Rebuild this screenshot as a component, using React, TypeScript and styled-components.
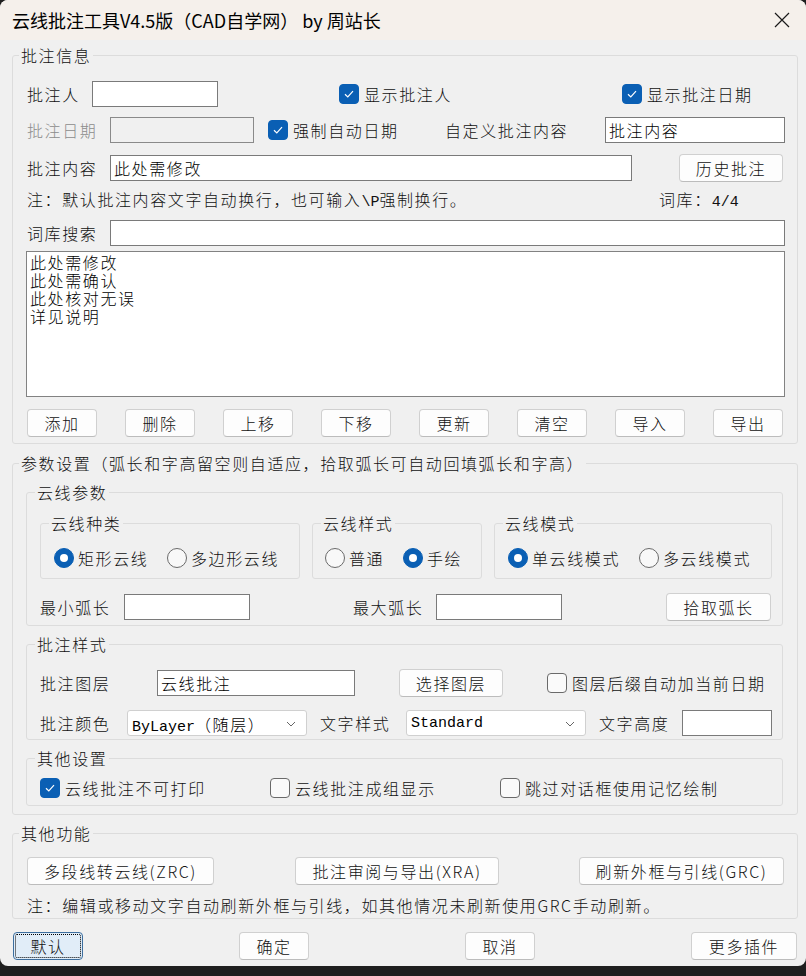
import styled, { createGlobalStyle } from "styled-components";

const GlobalStyle = createGlobalStyle`
	html, body {
		margin: 0;
		padding: 0;
		background: #1f1f1f;
	}
	body {
		width: 806px;
		height: 976px;
		overflow: hidden;
		font-family: "Noto Sans CJK SC", "Liberation Sans", sans-serif;
	}
`;

const Window = styled.div`
	width: 806px;
	height: 966px;
	background: #f0f0f0;
	border-radius: 8px;
	overflow: hidden;
	display: flex;
	flex-direction: column;
	font-size: 16px;
	font-weight: 300;
	letter-spacing: 1.6px;
	color: #111;
`;

const TitleBar = styled.header`
	height: 40px;
	flex: none;
	display: flex;
	align-items: center;
	justify-content: space-between;
	padding: 0 16px 0 12px;
	background: #f5f0eb;
	font-size: 18px;
	font-weight: 400;
	letter-spacing: 0;
	color: #000;
`;

const Content = styled.main`
	padding: 4px 8px 0 12px;
	display: flex;
	flex-direction: column;
`;

const Group = styled.fieldset<{ $mt?: number; $w?: number }>`
	box-sizing: border-box;
	width: ${p => (p.$w ? `${p.$w}px` : "auto")};
	margin: ${p => p.$mt ?? 0}px 0 0 0;
	padding: 0;
	border: 1px solid #dcdcdc;
	border-radius: 3px;
	min-width: 0;
`;

const Legend = styled.legend<{ $ml?: number }>`
	margin-left: ${p => p.$ml ?? 6}px;
	padding: 0 2px;
	height: 22px;
	line-height: 22px;
	white-space: nowrap;
`;

const GroupBody = styled.div<{ $pad: string }>`
	padding: ${p => p.$pad};
	display: flex;
	flex-direction: column;
`;

const Row = styled.div<{ $h?: number; $mt?: number; $gap?: number }>`
	display: flex;
	align-items: center;
	height: ${p => p.$h ?? 28}px;
	margin-top: ${p => p.$mt ?? 0}px;
	gap: ${p => p.$gap ?? 0}px;
`;

const Label = styled.span<{ $w?: number; $ml?: number; $muted?: boolean }>`
	flex: none;
	width: ${p => (p.$w ? `${p.$w}px` : "auto")};
	margin-left: ${p => p.$ml ?? 0}px;
	white-space: nowrap;
	color: ${p => (p.$muted ? "#8c8c8c" : "inherit")};
`;

const Mono = styled.span`
	font-family: "Liberation Mono", monospace;
	font-size: 15px;
	font-weight: 400;
	letter-spacing: 0;
`;

const TextBox = styled.input<{ $w: number; $ml?: number }>`
	flex: none;
	box-sizing: border-box;
	width: ${p => p.$w}px;
	height: 26px;
	margin: 0 0 0 ${p => p.$ml ?? 0}px;
	padding: 0 3px;
	border: 1px solid #7a7a7a;
	border-radius: 0;
	background: ${p => (p.disabled ? "#f0f0f0" : "#fff")};
	border-color: ${p => (p.disabled ? "#8a8a8a" : "#7a7a7a")};
	font: inherit;
	letter-spacing: inherit;
	color: #000;
	outline: none;
`;

const Button = styled.button<{ $w: number; $ml?: number; $default?: boolean }>`
	flex: none;
	box-sizing: border-box;
	width: ${p => p.$w}px;
	height: 28px;
	margin: 0 0 0 ${p => p.$ml ?? 0}px;
	padding: 0;
	border: 1px solid ${p => (p.$default ? "#3d6e9e" : "#d0d0d0")};
	border-bottom-color: ${p => (p.$default ? "#3d6e9e" : "#bcbcbc")};
	border-radius: 4px;
	background: ${p => (p.$default ? "#e1edf8" : "#fdfdfd")};
	outline: ${p => (p.$default ? "1px dotted #000" : "none")};
	outline-offset: -3px;
	font: inherit;
	letter-spacing: inherit;
	color: #111;
	white-space: nowrap;
`;

const ListBox = styled.div`
	box-sizing: border-box;
	width: 759px;
	height: 146px;
	margin: 4px 0 0 -1px;
	padding: 1px 3px;
	border: 1px solid #828282;
	background: #fff;
	line-height: 18px;
	color: #000;
`;

const Check = styled.label<{ $w?: number; $ml?: number }>`
	flex: none;
	display: flex;
	align-items: center;
	gap: 5px;
	width: ${p => (p.$w ? `${p.$w}px` : "auto")};
	margin-left: ${p => p.$ml ?? 0}px;
	white-space: nowrap;
`;

const Box = styled.span<{ $on?: boolean }>`
	flex: none;
	box-sizing: border-box;
	width: 20px;
	height: 20px;
	border-radius: 4px;
	display: flex;
	align-items: center;
	justify-content: center;
	background: ${p => (p.$on ? "#0a5fb4" : "#fafafa")};
	border: 1px solid ${p => (p.$on ? "#0a5fb4" : "#6a6a6a")};
`;

const Dot = styled.span<{ $on?: boolean }>`
	flex: none;
	box-sizing: border-box;
	width: 20px;
	height: 20px;
	border-radius: 50%;
	display: flex;
	align-items: center;
	justify-content: center;
	background: ${p => (p.$on ? "#0a5fb4" : "#f8f8f8")};
	border: 1px solid ${p => (p.$on ? "#0a5fb4" : "#6a6a6a")};
	&::after {
		content: "";
		display: ${p => (p.$on ? "block" : "none")};
		width: 8px;
		height: 8px;
		border-radius: 50%;
		background: #fff;
	}
`;

const Radio = styled.label<{ $w?: number }>`
	flex: none;
	display: flex;
	align-items: center;
	gap: 4px;
	width: ${p => (p.$w ? `${p.$w}px` : "auto")};
	white-space: nowrap;
`;

const Select = styled.div<{ $w: number }>`
	flex: none;
	box-sizing: border-box;
	width: ${p => p.$w}px;
	height: 26px;
	padding: 1px 10px 0 4px;
	display: flex;
	align-items: center;
	justify-content: space-between;
	border: 1px solid #d0d0d0;
	border-radius: 3px;
	background: #fff;
	color: #000;
`;

const RadioGroups = styled.div`
	display: flex;
	gap: 12px;
`;

const Footer = styled.footer`
	display: flex;
	margin-top: 13px;
	padding-left: 1px;
`;

function CheckBox({ on, children, w, ml }: { on?: boolean; children: React.ReactNode; w?: number; ml?: number }) {
	return (
		<Check $w={w} $ml={ml}>
			<Box $on={on}>
				{on && (
					<svg width="12" height="12" viewBox="0 0 12 12">
						<path d="M2 6.3 L4.8 9 L10 3.2" fill="none" stroke="#fff" strokeWidth="1.2" />
					</svg>
				)}
			</Box>
			{children}
		</Check>
	);
}

function RadioItem({ on, children, w }: { on?: boolean; children: React.ReactNode; w?: number }) {
	return (
		<Radio $w={w}>
			<Dot $on={on} />
			{children}
		</Radio>
	);
}

function Chevron() {
	return (
		<svg width="10" height="6" viewBox="0 0 10 6">
			<path d="M1 1 L5 5 L9 1" fill="none" stroke="#666" strokeWidth="1" />
		</svg>
	);
}

const toolButtons = ["添加", "删除", "上移", "下移", "更新", "清空", "导入", "导出"];
const phrases = ["此处需修改", "此处需确认", "此处核对无误", "详见说明"];

export default function App() {
	return (
		<Window>
			<GlobalStyle />
			<TitleBar>
				<span>云线批注工具V4.5版（CAD自学网） by 周站长</span>
				<svg width="16" height="16" viewBox="0 0 16 16">
					<path d="M1 1 L15 15 M15 1 L1 15" stroke="#1a1a1a" strokeWidth="1.2" />
				</svg>
			</TitleBar>
			<Content>
				<Group>
					<Legend>批注信息</Legend>
					<GroupBody $pad="14px 12px 6px 14px">
						<Row>
							<Label $w={65}>批注人</Label>
							<TextBox $w={126} />
							<CheckBox on ml={121} w={283}>显示批注人</CheckBox>
							<CheckBox on>显示批注日期</CheckBox>
						</Row>
						<Row $mt={8}>
							<Label $w={83} $muted>批注日期</Label>
							<TextBox $w={144} disabled />
							<CheckBox on ml={14} w={177}>强制自动日期</CheckBox>
							<Label $w={160}>自定义批注内容</Label>
							<TextBox $w={180} defaultValue="批注内容" />
						</Row>
						<Row $mt={10}>
							<Label $w={83}>批注内容</Label>
							<TextBox $w={522} defaultValue="此处需修改" />
							<Button $w={104} $ml={47}>历史批注</Button>
						</Row>
						<Row $mt={8} $h={18}>
							<Label $w={632}>注：默认批注内容文字自动换行，也可输入<Mono>\P</Mono>强制换行。</Label>
							<Label>词库：<Mono>4/4</Mono></Label>
						</Row>
						<Row $mt={11}>
							<Label $w={83}>词库搜索</Label>
							<TextBox $w={675} />
						</Row>
						<ListBox>
							{phrases.map(p => <div key={p}>{p}</div>)}
						</ListBox>
						<Row $mt={12} $gap={28}>
							{toolButtons.map(b => <Button key={b} $w={70}>{b}</Button>)}
						</Row>
					</GroupBody>
				</Group>

				<Group $mt={8}>
					<Legend>参数设置（弧长和字高留空则自适应，拾取弧长可自动回填弧长和字高）</Legend>
					<GroupBody $pad="7px 14px 8px 13px">
						<Group>
							<Legend $ml={8}>云线参数</Legend>
							<GroupBody $pad="9px 9px 4px 13px">
								<RadioGroups>
									<Group $w={260}>
										<Legend $ml={8}>云线种类</Legend>
										<GroupBody $pad="14px 6px 10px 13px">
											<Row $h={20}>
												<RadioItem on w={113}>矩形云线</RadioItem>
												<RadioItem>多边形云线</RadioItem>
											</Row>
										</GroupBody>
									</Group>
									<Group $w={170}>
										<Legend $ml={8}>云线样式</Legend>
										<GroupBody $pad="14px 6px 10px 12px">
											<Row $h={20}>
												<RadioItem w={78}>普通</RadioItem>
												<RadioItem on>手绘</RadioItem>
											</Row>
										</GroupBody>
									</Group>
									<Group $w={278}>
										<Legend $ml={8}>云线模式</Legend>
										<GroupBody $pad="14px 6px 10px 13px">
											<Row $h={20}>
												<RadioItem on w={131}>单云线模式</RadioItem>
												<RadioItem>多云线模式</RadioItem>
											</Row>
										</GroupBody>
									</Group>
								</RadioGroups>
								<Row $mt={14}>
									<Label $w={84}>最小弧长</Label>
									<TextBox $w={126} />
									<Label $w={83} $ml={103}>最大弧长</Label>
									<TextBox $w={126} />
									<Button $w={105} $ml={104}>拾取弧长</Button>
								</Row>
							</GroupBody>
						</Group>

						<Group $mt={7}>
							<Legend $ml={8}>批注样式</Legend>
							<GroupBody $pad="13px 9px 3px 13px">
								<Row $h={30}>
									<Label $w={117}>批注图层</Label>
									<TextBox $w={198} defaultValue="云线批注" />
									<Button $w={104} $ml={44}>选择图层</Button>
									<CheckBox ml={44}>图层后缀自动加当前日期</CheckBox>
								</Row>
								<Row $mt={12} $h={26}>
									<Label $w={87}>批注颜色</Label>
									<Select $w={180}>
										<span><Mono>ByLayer</Mono>（随层）</span>
										<Chevron />
									</Select>
									<Label $w={86} $ml={13}>文字样式</Label>
									<Select $w={180}>
										<Mono>Standard</Mono>
										<Chevron />
									</Select>
									<Label $w={83} $ml={13}>文字高度</Label>
									<TextBox $w={90} />
								</Row>
							</GroupBody>
						</Group>

						<Group $mt={7}>
							<Legend $ml={8}>其他设置</Legend>
							<GroupBody $pad="9px 9px 7px 13px">
								<Row $h={20}>
									<CheckBox on w={230}>云线批注不可打印</CheckBox>
									<CheckBox w={230}>云线批注成组显示</CheckBox>
									<CheckBox>跳过对话框使用记忆绘制</CheckBox>
								</Row>
							</GroupBody>
						</Group>
					</GroupBody>
				</Group>

				<Group $mt={7}>
					<Legend>其他功能</Legend>
					<GroupBody $pad="13px 12px 4px 14px">
						<Row>
							<Button $w={187}>多段线转云线(ZRC)</Button>
							<Button $w={204} $ml={81}>批注审阅与导出(XRA)</Button>
							<Button $w={205} $ml={80}>刷新外框与引线(GRC)</Button>
						</Row>
						<Row $mt={11} $h={18}>
							<Label>注：编辑或移动文字自动刷新外框与引线，如其他情况未刷新使用GRC手动刷新。</Label>
						</Row>
					</GroupBody>
				</Group>

				<Footer>
					<Button $w={70} $default>默认</Button>
					<Button $w={70} $ml={156}>确定</Button>
					<Button $w={70} $ml={156}>取消</Button>
					<Button $w={106} $ml={156}>更多插件</Button>
				</Footer>
			</Content>
		</Window>
	);
}
